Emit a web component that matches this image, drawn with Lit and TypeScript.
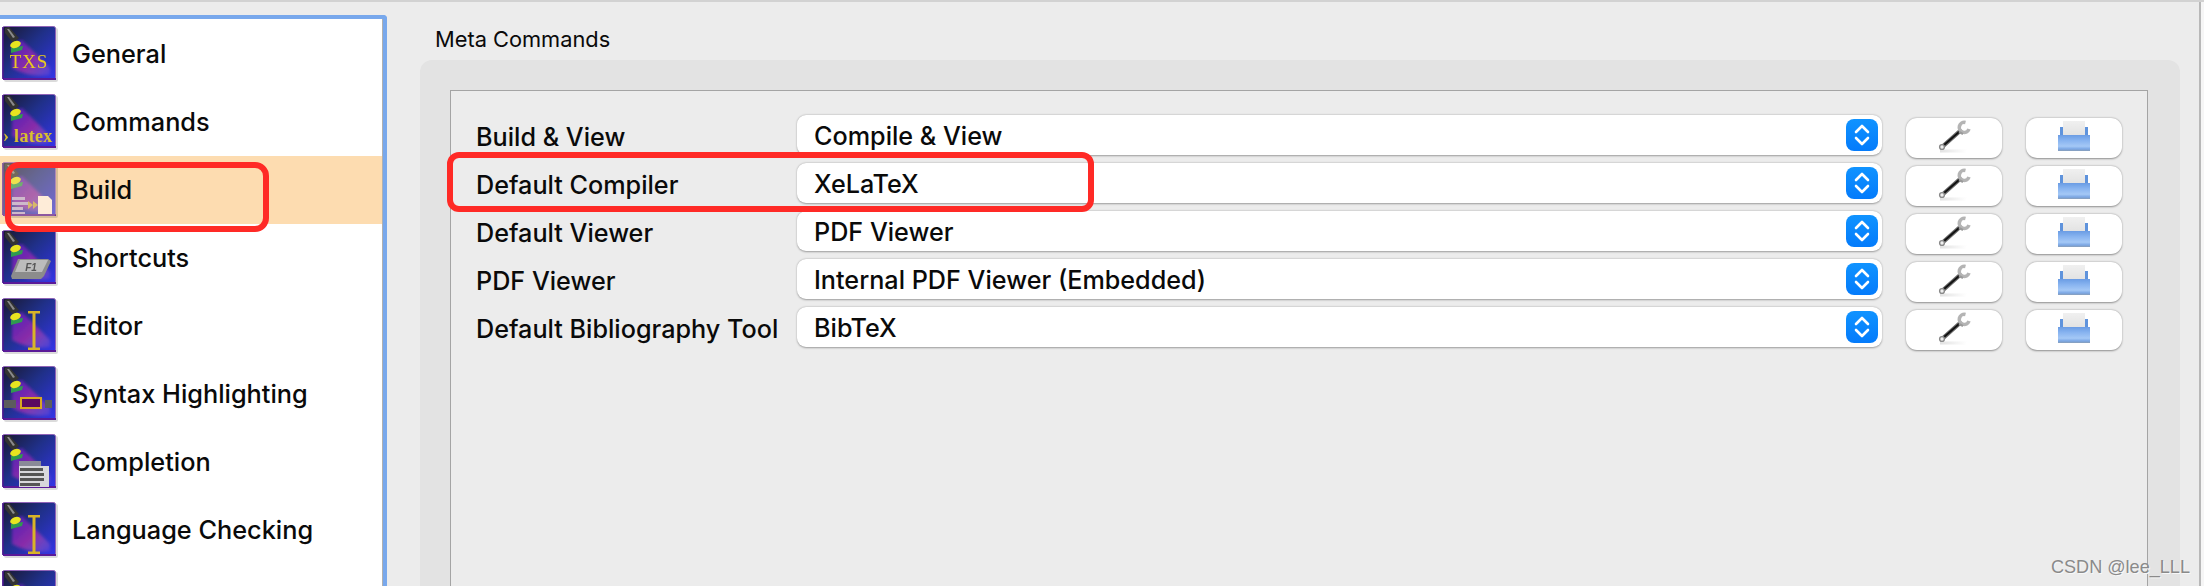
import { LitElement, html, css, svg } from "lit";
import { customElement } from "lit/decorators.js";

const overlays: Record<string, unknown> = {
  txs: svg`<text x="29" y="42" text-anchor="middle" font-family="Liberation Serif" font-size="19" fill="#e8cc20" letter-spacing="0.8">TXS</text>`,
  latex: svg`<text x="3" y="48" font-family="Liberation Serif" font-size="18" font-weight="700" fill="#d8c030" letter-spacing="0.3">› latex</text>`,
  build: svg`<g fill="#b8a8d8"><rect x="12" y="35" width="13" height="3"/><rect x="12" y="40" width="17" height="3"/><rect x="12" y="45" width="11" height="3"/><rect x="12" y="50" width="13" height="2"/></g>
    <path d="M28 39l5 4-5 4zM33 39l5 4-5 4z" fill="#c8a848"/>
    <path d="M38 34h10l4 4v14H38z" fill="#fff4ea"/>`,
  keys: svg`<path d="M18 29h30l3 2-7 15-3 3H12l-1-3z" fill="#8c8c8c"/><path d="M20 30h28l-6 12H15z" fill="#bcbcbc"/><text x="31" y="41" text-anchor="middle" font-family="Liberation Sans" font-size="10" font-style="italic" font-weight="700" fill="#555">F1</text>`,
  caret: svg`<path d="M28 13h12v2.500h-4.500v34H40V52H28v-2.500h4.500v-34H28z" fill="#d8b428"/>`,
  syntax: svg`<rect x="4" y="34" width="12" height="8" fill="#5c5c5c"/><rect x="21" y="32" width="20" height="10" fill="#5a0a60" stroke="#d8a820" stroke-width="2"/><rect x="45" y="34" width="7" height="8" fill="#5c5c5c"/>`,
  completion: svg`<rect x="19" y="27" width="22" height="6" fill="#8a8a98"/><rect x="19" y="32" width="30" height="21" fill="#d8d8dc"/><g fill="#555"><rect x="20" y="34" width="23" height="3"/><rect x="20" y="39" width="24" height="3"/><rect x="20" y="44" width="24" height="3"/><rect x="20" y="49" width="20" height="3"/></g>`,
};

let uid = 0;
function pageIcon(kind: string) {
  const id = `i${uid++}`;
  return html`<svg class="page-icon" viewBox="0 0 58 58" width="58" height="58">
    <defs>
      <linearGradient id="${id}b" x1="0" y1="0" x2="1" y2="1">
        <stop offset="0" stop-color="#181830"/><stop offset=".45" stop-color="#20308a"/><stop offset="1" stop-color="#3434ea"/>
      </linearGradient>
      <linearGradient id="${id}c" x1="0" y1="0" x2="1" y2="1">
        <stop offset="0" stop-color="#4a20b8"/><stop offset=".55" stop-color="#8a2ca8"/><stop offset="1" stop-color="#a868d8" stop-opacity=".2"/>
      </linearGradient>
      <filter id="${id}f" x="-20%" y="-20%" width="140%" height="140%"><feGaussianBlur stdDeviation="1.800"/></filter>
    </defs>
    <rect x="4" y="2" width="54" height="54" rx="2" fill="#000" opacity=".14"/>
    <rect x="2.500" y=".5" width="53" height="53" rx="2" fill="url(#${id}b)" stroke="#8f63b8"/>
    <path d="M12 18L22 14L50 42V49Q30 52 12 42Z" fill="url(#${id}c)" filter="url(#${id}f)"/>
    <path d="M3 53h53" stroke="#5a1a98" stroke-width="2"/>
    <path d="M3 1v52" stroke="#4a1890" stroke-width="1.500"/>
    <path d="M5 2l4-1 10 11-6 5-8-10z" fill="#333"/>
    <path d="M7 3l2 0 6 8-2 1z" fill="#8a8a8a"/>
    <path d="M11 22l5 -1 7 -1 -1 4 -11 3z" fill="#2f9a50"/>
    <ellipse cx="15.500" cy="18.500" rx="5.500" ry="3.400" fill="#e8e420" transform="rotate(-18 15.500 18.500)"/>
    ${overlays[kind]}
    ${kind === "build" ? svg`<rect x="2" y="0" width="54" height="54" rx="2" fill="#fddcb0" opacity=".32"/>` : ""}
  </svg>`;
}

const wrench = html`<svg class="tool" viewBox="0 0 34 34" width="34" height="34">
  <defs><linearGradient id="ws" x1="0" x2="1"><stop offset="0" stop-color="#d4d4d4"/><stop offset="1" stop-color="#fff"/></linearGradient></defs>
  <rect x="3" y="29.500" width="27" height="3" fill="url(#ws)" opacity=".7"/>
  <path d="M5 27L23 11" stroke="#6a6a6a" stroke-width="4.200" stroke-linecap="round"/>
  <path d="M7 25L22 12" stroke="#111" stroke-width="1.800"/>
  <circle cx="5" cy="27" r="2.400" fill="#efefef" stroke="#8a8a8a" stroke-width="1.400"/>
  <path d="M28.500 2.500A5 5 0 1 0 32 9" fill="none" stroke="#b4b4b4" stroke-width="3.600"/>
  <path d="M22 12l4 2" stroke="#9a9a9a" stroke-width="2"/>
</svg>`;

const printer = html`<svg class="tool" viewBox="0 0 34 34" width="34" height="34">
  <defs>
    <linearGradient id="pb" x1="0" x2="0" y1="0" y2="1"><stop offset="0" stop-color="#6a9ce4"/><stop offset=".35" stop-color="#88b4f0"/><stop offset=".7" stop-color="#a4c8f6"/><stop offset=".88" stop-color="#7aa6e4"/><stop offset="1" stop-color="#8a9fb8"/></linearGradient>
    <linearGradient id="pp" x1="0" x2="0" y1="0" y2="1"><stop offset="0" stop-color="#f0f0f0"/><stop offset="1" stop-color="#e2e2e2"/></linearGradient>
  </defs>
  <rect x="3" y="7" width="28" height="10" fill="#5f93dc"/>
  <rect x="6" y="1" width="22" height="15" fill="url(#pp)"/>
  <rect x="1" y="15" width="32" height="16" fill="url(#pb)"/>
</svg>`;

const pages: [string, string][] = [
  ["General", "txs"], ["Commands", "latex"], ["Build", "build"], ["Shortcuts", "keys"],
  ["Editor", "caret"], ["Syntax Highlighting", "syntax"], ["Completion", "completion"],
  ["Language Checking", "caret"], ["", "completion"],
];

const rows: [string, string][] = [
  ["Build & View", "Compile & View"],
  ["Default Compiler", "XeLaTeX"],
  ["Default Viewer", "PDF Viewer"],
  ["PDF Viewer", "Internal PDF Viewer (Embedded)"],
  ["Default Bibliography Tool", "BibTeX"],
];

@customElement("app-root")
export class AppRoot extends LitElement {
  static styles = css`
    :host {
      display: block; position: relative; width: 2204px; height: 586px; overflow: hidden;
      background: #ececec; font-family: Inter, "Liberation Sans", sans-serif; color: #0a0a0a;
    }
    .shell { display: flex; height: 586px; box-sizing: border-box; border-top: 2px solid #d2d2d2; }
    .sidebar {
      width: 387px; flex: none; margin-top: 13px; box-sizing: border-box; overflow: hidden;
      background: #fff; border: solid #78a8ec; border-width: 4px 4px 0 0; border-top-right-radius: 4px;
      box-shadow: inset -1px 0 0 #b0b0b0; padding-top: 1px;
    }
    .page { display: flex; align-items: flex-start; height: 68px; box-sizing: border-box; }
    .page.sel { background: #fddcb0; box-shadow: inset -1px 0 0 #b0b0b0; }
    .page-icon { display: block; margin-top: 6px; flex: none; filter: blur(.4px); }
    .page span { font-size: 25.300px; line-height: 68px; margin-left: 14px; font-weight: 450; }
    .content { width: 1778px; flex: none; margin-left: 33px; display: flex; flex-direction: column; }
    .title { font-size: 21.800px; line-height: 24px; margin: 25px 0 9px 15px; }
    .group { flex: 1; background: #e3e3e3; border-radius: 12px 12px 0 0; padding: 30px 32px 0 30px; width: 1760px; box-sizing: border-box; }
    .box {
      height: 100%; box-sizing: border-box; background: #ececec; border: solid #a4a4a4; border-width: 1px 1px 0 1px;
      padding: 24px 0 0 25px; display: grid; grid-template-columns: 321px 1085px 96px 96px;
      grid-auto-rows: 48px; align-content: start;
    }
    .label { font-size: 25.200px; line-height: 45px; font-weight: 450; }
    .combo {
      height: 40px; background: #fff; border-radius: 9px; box-shadow: 0 .5px 2px rgba(0,0,0,.35);
      display: flex; align-items: center; justify-content: space-between; padding: 1px 4px 0 17px; box-sizing: border-box; font-size: 25.200px; font-weight: 450;
    }
    .step { width: 32px; height: 32px; border-radius: 8px; margin-top: -1px; background: linear-gradient(#1093ff, #047bfb); display: flex; }
    .btn {
      height: 40px; margin-top: 3px; background: #fff; border-radius: 11px; box-shadow: 0 .5px 2px rgba(0,0,0,.4);
      display: flex; align-items: center; justify-content: center;
    }
    .tool { margin-bottom: 3px; filter: blur(.4px); }
    .btn.a { margin-left: 24px; width: 96px; }
    .btn.b { margin-left: 48px; width: 96px; }
    .edge { width: 5px; flex: none; margin-left: 1px; background: #f6f6f6; border-left: 2px solid #b8b8b8; box-sizing: border-box; }
    .mark { position: absolute; border: 6px solid #ff2a26; box-sizing: border-box; }
    .m1 { left: 5px; top: 162px; width: 264px; height: 70px; border-radius: 14px; }
    .m2 { left: 447px; top: 152px; width: 647px; height: 60px; border-radius: 12px; }
    .wm {
      position: absolute; right: 14px; top: 557px; font: 18.100px/20px "Liberation Sans", sans-serif;
      color: #8a8a8a; text-shadow: 1px 1px 0 #f8f8f8;
    }
  `;

  render() {
    return html`
      <div class="shell">
        <nav class="sidebar">
          ${pages.map(([name, kind], i) => html`
            <div class="page ${i === 2 ? "sel" : ""}">${pageIcon(kind)}<span>${name}</span></div>`)}
        </nav>
        <main class="content">
          <div class="title">Meta Commands</div>
          <section class="group">
            <div class="box">
              ${rows.map(([label, value]) => html`
                <div class="label">${label}</div>
                <div class="combo">${value}
                  <div class="step"><svg viewBox="0 0 32 32" width="32" height="32" fill="none" stroke="#fff" stroke-width="2.600" stroke-linecap="round" stroke-linejoin="round"><path d="M10 13l6-6 6 6M10 19l6 6 6-6"/></svg></div>
                </div>
                <div class="btn a">${wrench}</div>
                <div class="btn b">${printer}</div>`)}
            </div>
          </section>
        </main>
        <div class="edge"></div>
      </div>
      <div class="mark m1"></div>
      <div class="mark m2"></div>
      <div class="wm">CSDN @lee_LLL</div>
    `;
  }
}
